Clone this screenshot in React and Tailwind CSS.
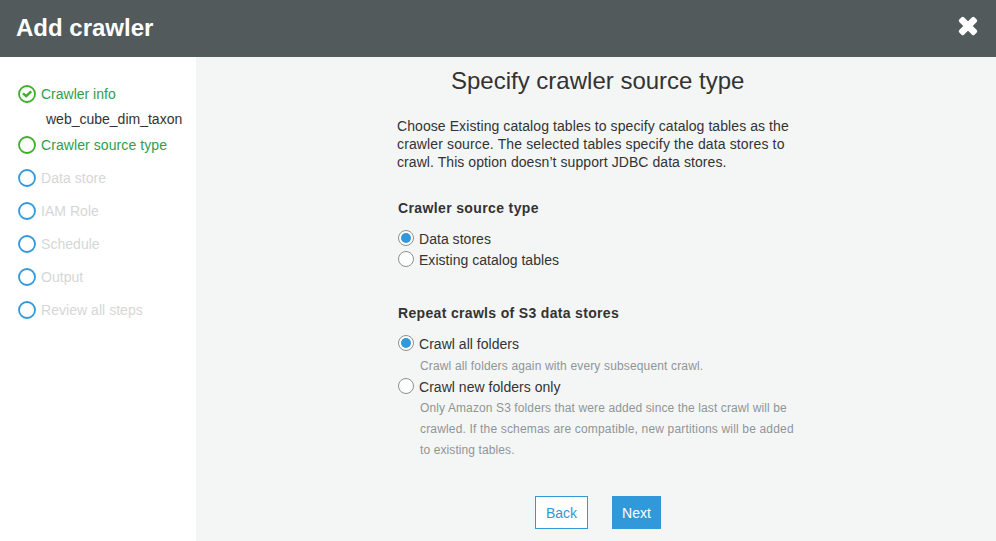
const pendingSteps = ['Data store', 'IAM Role', 'Schedule', 'Output', 'Review all steps'];

function StepIcon({ color, checked }) {
  return (
    <svg className="mr-[5px] size-[18px] shrink-0" viewBox="0 0 18 18" fill="none">
      <circle cx="9" cy="9" r="8" stroke={color} strokeWidth="1.8" />
      {checked && <path d="M5 8.3L8.2 11.2L13.2 6.3" stroke={color} strokeWidth="2.4" />}
    </svg>
  );
}

function Radio({ checked, label }) {
  return (
    <label className="flex h-[21px] items-start">
      <span className="mr-[5px] flex size-4 shrink-0 items-center justify-center rounded-full border border-[#8c9090] bg-white">
        {checked && <span className="size-[10px] rounded-full bg-[#3199d9]" />}
      </span>
      <span className="pt-px leading-4 tracking-[0.03px]">{label}</span>
    </label>
  );
}

export default function App() {
  return (
    <div className="flex h-[541px] w-[996px] flex-col overflow-hidden bg-[#f4f6f6] font-['Liberation_Sans',Arial,sans-serif] text-sm text-[#333]">
      <header className="flex h-[57px] shrink-0 items-center justify-between bg-[#525a5c] pr-[18px] pl-4 text-white">
        <h1 className="mb-px text-2xl leading-[56px] font-bold">Add crawler</h1>
        <button aria-label="Close" className="mb-[5px]">
          <svg className="size-5" viewBox="0 0 20 20" fill="white">
            <rect x="-0.75" y="6.7" width="21.5" height="6.6" rx="1.7" transform="rotate(45 10 10)" />
            <rect x="-0.75" y="6.7" width="21.5" height="6.6" rx="1.7" transform="rotate(-45 10 10)" />
          </svg>
        </button>
      </header>
      <div className="flex flex-1">
        <nav className="w-[196px] shrink-0 bg-white pt-7 pl-[18px]">
          <div className="flex h-[18px] items-center text-[#2f9e4a]">
            <StepIcon color="#3fae2a" checked />
            Crawler info
          </div>
          <div className="mt-[7px] pl-7 leading-[18px]">web_cube_dim_taxon</div>
          <div className="mt-2 flex h-[18px] items-center tracking-[0.08px] text-[#2f9e4a]">
            <StepIcon color="#3fae2a" />
            Crawler source type
          </div>
          {pendingSteps.map((step) => (
            <div key={step} className="mt-[15px] flex h-[18px] items-center tracking-[0.04px] text-[#d5d7d7]">
              <StepIcon color="#3199d9" />
              {step}
            </div>
          ))}
        </nav>
        <main className="flex-1 pl-[201px]">
          <h2 className="mt-2 ml-[54px] text-2xl leading-8">Specify crawler source type</h2>
          <p className="mt-5 leading-[18px] whitespace-nowrap">
            <span className="block tracking-[0.08px]">Choose Existing catalog tables to specify catalog tables as the</span>
            <span className="block tracking-[0.13px]">crawler source. The selected tables specify the data stores to</span>
            <span className="block tracking-[0.07px]">crawl. This option doesn’t support JDBC data stores.</span>
          </p>
          <section className="mt-7 pl-px">
            <h3 className="mb-[13px] leading-[18px] font-bold tracking-[0.37px]">Crawler source type</h3>
            <Radio checked label="Data stores" />
            <Radio label="Existing catalog tables" />
          </section>
          <section className="mt-8 pl-px">
            <h3 className="mb-[13px] leading-[18px] font-bold tracking-[0.33px]">Repeat crawls of S3 data stores</h3>
            <Radio checked label="Crawl all folders" />
            <p className="mb-px pl-[22px] text-xs leading-[21px] tracking-[0.15px] text-[#8f9596]">
              Crawl all folders again with every subsequent crawl.
            </p>
            <Radio label="Crawl new folders only" />
            <p className="-mt-px pl-[22px] text-xs leading-[21px] whitespace-nowrap text-[#8f9596]">
              <span className="block tracking-[0.11px]">Only Amazon S3 folders that were added since the last crawl will be</span>
              <span className="block tracking-[0.17px]">crawled. If the schemas are compatible, new partitions will be added</span>
              <span className="block tracking-[0.1px]">to existing tables.</span>
            </p>
          </section>
          <div className="mt-[35px] ml-[138px] flex gap-6">
            <button className="h-[33px] w-[53px] border border-solid border-[color:#3199d9] bg-white text-[#3199d9]">Back</button>
            <button className="h-[33px] w-[49px] bg-[#3199d9] text-white">Next</button>
          </div>
        </main>
      </div>
    </div>
  );
}
